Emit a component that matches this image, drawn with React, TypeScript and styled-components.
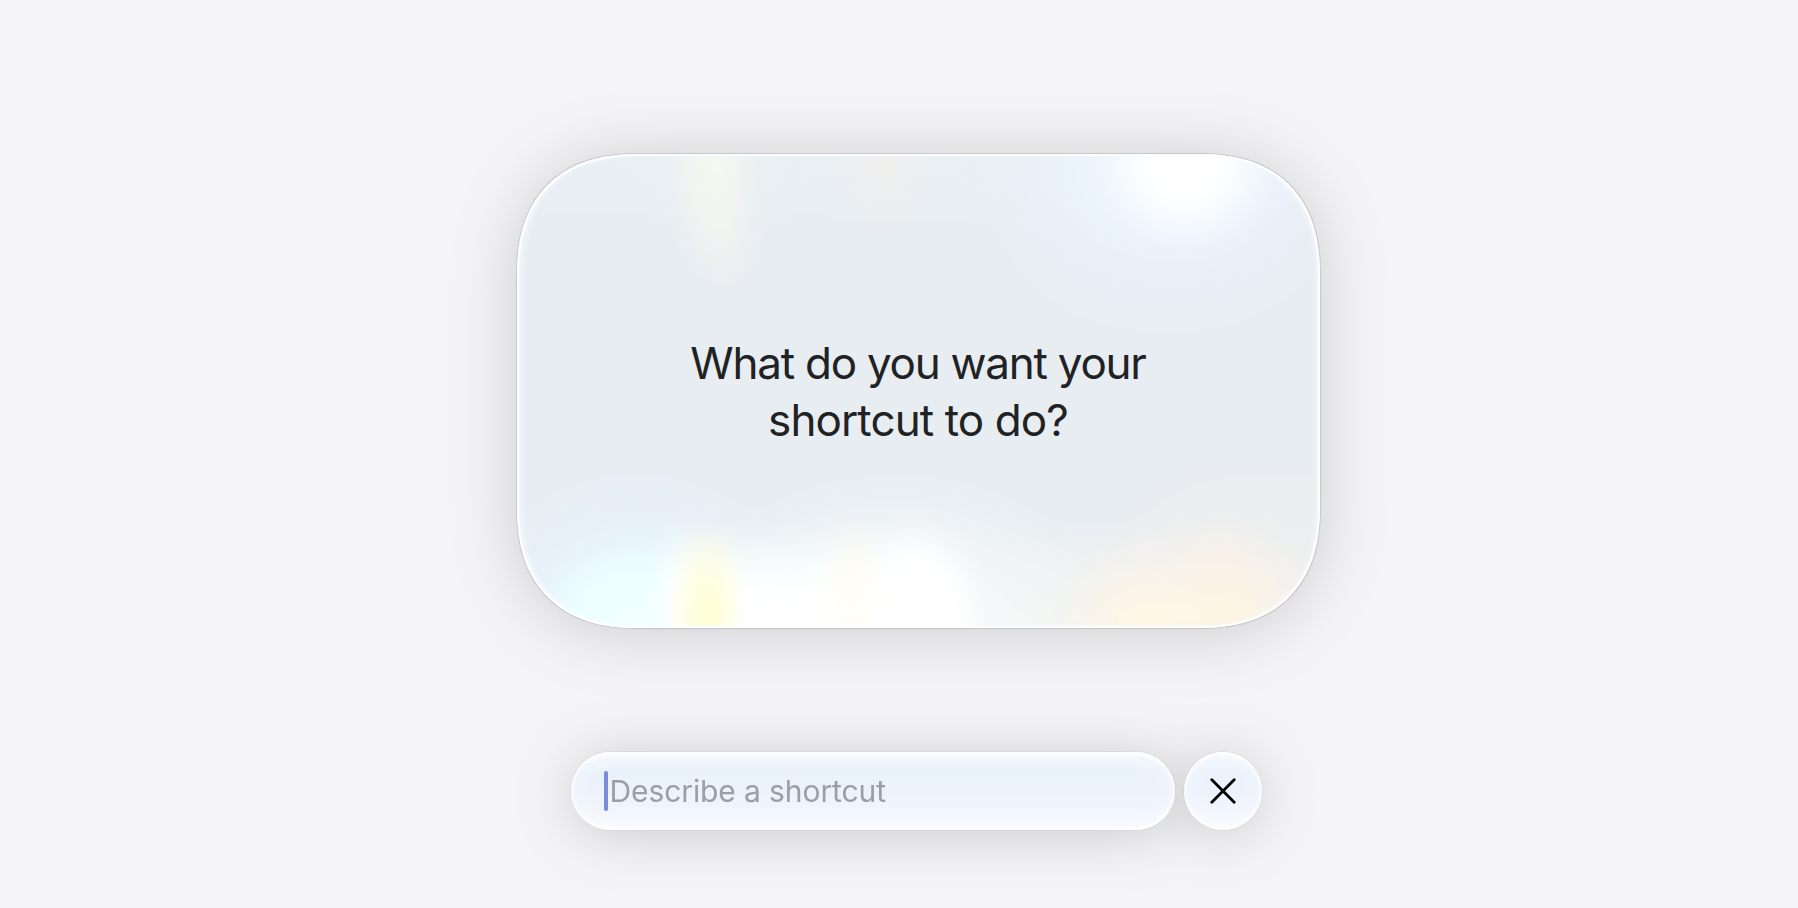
import { useState } from 'react';
import { createGlobalStyle, styled } from 'styled-components';

const GlobalStyle = createGlobalStyle`
  body {
    margin: 0;
    background: #f5f5f7;
    font-family: 'Inter', 'Liberation Sans', sans-serif;
  }
`;

const Page = styled.main`
  display: flex;
  flex-direction: column;
  align-items: center;
  gap: 124px;
  width: 100%;
  height: 908px;
  padding: 154px 0 0 38px;
  box-sizing: border-box;
  overflow: hidden;
`;

const PromptCard = styled.section`
  position: relative;
  isolation: isolate;
  display: flex;
  align-items: center;
  justify-content: center;
  width: 803px;
  height: 474px;
  padding-top: 2px;
  box-sizing: border-box;
  border-radius: 109px;
  overflow: hidden;
  background: #e8edf2;
  box-shadow:
    0 0 0 1px rgba(0, 0, 0, 0.08),
    0 0 1px 1px rgba(0, 0, 0, 0.04),
    0 4px 70px rgba(0, 0, 0, 0.17);

  @supports (corner-shape: superellipse(1.25)) {
    border-radius: 122px;
    corner-shape: superellipse(1.25);
  }

  /* bright rim of the glass */
  &::after {
    content: '';
    position: absolute;
    inset: 0;
    border-radius: inherit;
    corner-shape: inherit;
    pointer-events: none;
    box-shadow:
      inset 0 0 1px 2px rgba(255, 255, 255, 0.9),
      inset 5px 0 7px 0 rgba(242, 250, 255, 0.9),
      inset -3px 0 6px 0 rgba(255, 255, 255, 0.6);
  }
`;

// Coloured light behind the glass. It reaches 40px past the card so the blur
// has no faded edge inside it.
const Reflections = styled.div`
  position: absolute;
  z-index: -1;
  inset: -40px;
  filter: blur(11px);
  background:
    /* top */
    radial-gradient(90px 88px at 708px 50px, #ffffff 0%, #ffffff 38%, rgba(255, 255, 255, 0) 100%),
    radial-gradient(170px 125px at 695px 50px, rgba(242, 250, 255, 0.9) 0%, rgba(236, 246, 255, 0.6) 55%, rgba(232, 240, 248, 0) 100%),
    radial-gradient(230px 210px at 690px 70px, rgba(232, 240, 250, 0.9) 0%, rgba(232, 239, 247, 0.5) 55%, rgba(232, 238, 243, 0) 100%),
    radial-gradient(46px 140px at 236px 25px, #f7f9ef 0%, rgba(246, 248, 240, 0.8) 45%, rgba(240, 241, 238, 0) 100%),
    radial-gradient(34px 70px at 250px 110px, rgba(242, 243, 238, 0.8) 0%, rgba(240, 241, 238, 0) 100%),
    radial-gradient(55px 85px at 406px 35px, rgba(243, 239, 236, 0.95) 0%, rgba(240, 240, 236, 0) 100%),
    linear-gradient(rgba(234, 243, 245, 0.6), rgba(234, 243, 245, 0)) 0 0 / 100% 120px no-repeat,
    /* bottom, from left to right */
    linear-gradient(rgba(255, 252, 236, 0), rgba(255, 253, 228, 0.9) 45px, #fefed6 80px) 207px 408px / 46px 160px no-repeat,
    linear-gradient(rgba(255, 249, 236, 0), #fffcf0 50px, #fffef6 90px) 360px 405px / 32px 160px no-repeat,
    radial-gradient(75px 120px at 440px 524px, #ffffff 0%, #ffffff 65%, rgba(255, 255, 255, 0) 100%),
    linear-gradient(rgba(242, 251, 255, 0), rgba(250, 255, 255, 0.9) 45px, #ffffff 65px) 186px 412px / 264px 160px no-repeat,
    radial-gradient(110px 90px at 160px 510px, #f2ffff 0%, #ecffff 60%, rgba(232, 250, 255, 0) 100%),
    radial-gradient(165px 130px at 160px 485px, #e6f5ff 0%, rgba(230, 243, 253, 0.75) 50%, rgba(230, 238, 246, 0) 100%),
    radial-gradient(190px 110px at 420px 470px, #f4f9fb 0%, rgba(238, 244, 248, 0) 100%),
    radial-gradient(75px 65px at 668px 512px, #fff7e2 0%, rgba(254, 246, 230, 0.7) 50%, rgba(251, 243, 231, 0) 100%),
    radial-gradient(70px 60px at 750px 502px, #fef5e0 0%, rgba(253, 244, 228, 0.7) 45%, rgba(250, 243, 232, 0) 100%),
    radial-gradient(65px 60px at 745px 462px, rgba(252, 241, 230, 0.8) 0%, rgba(248, 240, 232, 0) 100%),
    radial-gradient(155px 110px at 715px 510px, #fbf3e9 0%, rgba(248, 242, 235, 0.75) 50%, rgba(240, 240, 238, 0) 100%),
    radial-gradient(190px 170px at 790px 500px, rgba(240, 241, 237, 0.9) 0%, rgba(238, 240, 238, 0) 100%),
    radial-gradient(330px 110px at 560px 520px, #f5f7f4 0%, rgba(242, 245, 243, 0.8) 50%, rgba(236, 240, 242, 0) 100%),
    #e8edf2;
`;

const PromptTitle = styled.h1`
  margin: 0;
  font-size: 44px;
  font-weight: 400;
  line-height: 56.7px;
  text-align: center;
  white-space: nowrap;
  color: #212224;
`;

const TitleLine = styled.span<{ $tracking: number }>`
  display: block;
  letter-spacing: ${({ $tracking }) => $tracking}px;
`;

const Composer = styled.form`
  display: flex;
  align-items: center;
  gap: 9px;
  margin-right: 4px;
  filter: drop-shadow(0 4px 28px rgba(0, 0, 0, 0.17));
`;

const glass = `
  background: linear-gradient(180deg, #f3f8fd 0%, #e9f2fc 24%, #edf3fc 55%, #f7f9fd 100%);
  box-shadow:
    inset 0 3px 4px rgba(255, 255, 255, 0.9),
    inset 0 -3px 4px rgba(255, 255, 255, 0.9),
    inset 0 0 26px rgba(255, 255, 255, 0.5),
    0 0 0 1px rgba(0, 0, 0, 0.04);
`;

const Field = styled.label`
  display: flex;
  align-items: center;
  width: 604px;
  height: 78px;
  padding-left: 33px;
  box-sizing: border-box;
  border-radius: 39px;
  ${glass}
`;

const Caret = styled.span`
  flex: none;
  width: 4px;
  height: 40px;
  margin-bottom: 1px;
  border-radius: 2px;
  background: #7b8bd9;
`;

const Input = styled.input`
  flex: 1;
  min-width: 0;
  margin: 0 24px 0 2px;
  padding: 0;
  border: none;
  outline: none;
  background: transparent;
  font-family: inherit;
  font-size: 30px;
  font-weight: 430;
  line-height: 40px;
  letter-spacing: -0.1px;
  color: #212224;

  &::placeholder {
    color: #9b9ea3;
    opacity: 1;
  }
`;

const CloseButton = styled.button`
  display: flex;
  align-items: center;
  justify-content: center;
  width: 78px;
  height: 78px;
  padding: 0;
  border: none;
  border-radius: 50%;
  color: #000000;
  cursor: pointer;
  ${glass}
`;

const CloseIcon = () => (
  <svg width="26" height="26" viewBox="0 0 26 26" fill="none">
    <path
      d="M1.8 1.8L24.2 24.2M24.2 1.8L1.8 24.2"
      stroke="currentColor"
      strokeWidth="2.8"
      strokeLinecap="round"
    />
  </svg>
);

export default function App() {
  const [description, setDescription] = useState('');

  return (
    <>
      <GlobalStyle />
      <Page>
        <PromptCard>
          <Reflections />
          <PromptTitle>
            <TitleLine $tracking={-1.25}>What do you want your</TitleLine>
            <TitleLine $tracking={-0.9}>shortcut to do?</TitleLine>
          </PromptTitle>
        </PromptCard>
        <Composer onSubmit={(event) => event.preventDefault()}>
          <Field>
            {description === '' && <Caret />}
            <Input
              value={description}
              placeholder="Describe a shortcut"
              onChange={(event) => setDescription(event.target.value)}
            />
          </Field>
          <CloseButton type="button" aria-label="Close">
            <CloseIcon />
          </CloseButton>
        </Composer>
      </Page>
    </>
  );
}
